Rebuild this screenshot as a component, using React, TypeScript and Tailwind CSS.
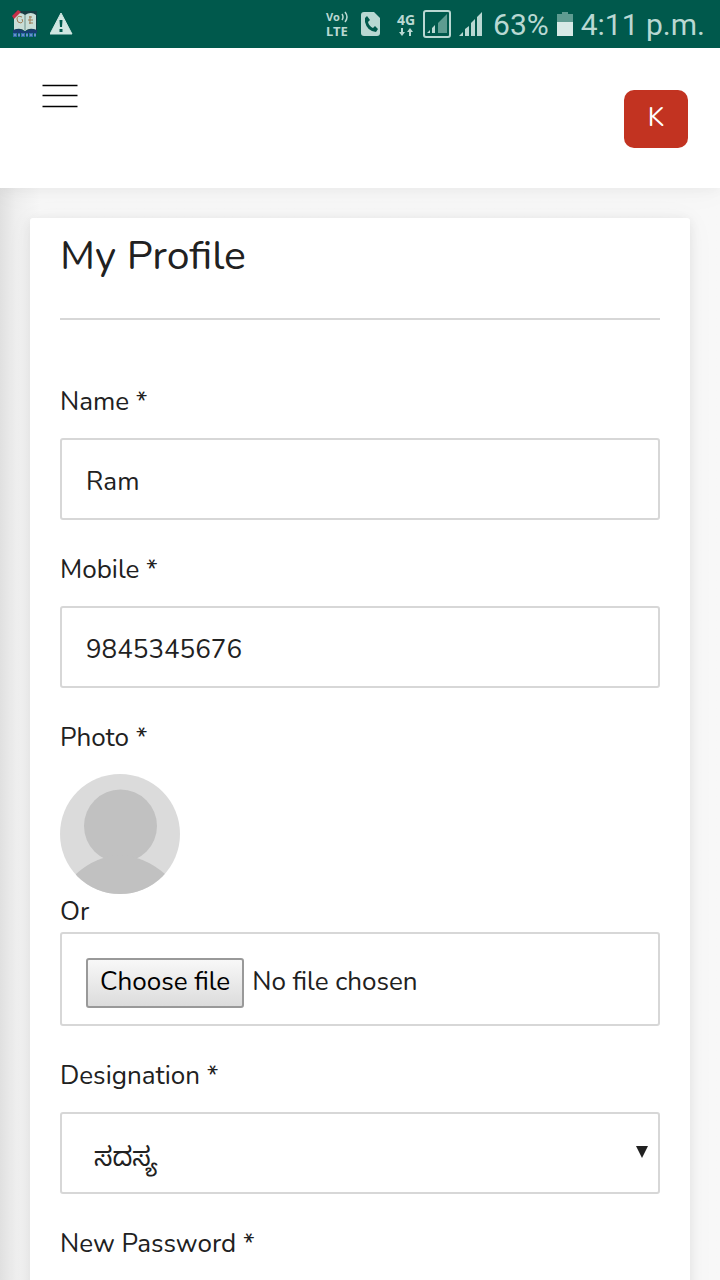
import { useState } from "react";
import type { ReactNode } from "react";

const inputStyle =
  "block h-[82px] w-full rounded-[3px] border-2 border-[#d7d7d7] bg-white px-6 pt-1 text-[#212121] outline-none";

function StatusBar() {
  return (
    <div className="flex h-12 shrink-0 items-center justify-between bg-[#00594c] pl-3 pr-[15px] font-[Roboto,sans-serif] text-[#b9d8d2]">
      <div className="flex items-center gap-3">
        <svg width="26" height="28" viewBox="0 0 26 28">
          <path d="M3 1h22v19H3z" fill="#173d43" />
          <path d="M2 5q6-4 11 0q6-4 11 0v15q-6-3-11 1q-5-4-11-1z" fill="#c9ded7" />
          <path d="M13 5v15" stroke="#68908b" />
          <path d="M10 7q-5-2-5 2t4 4q3-1 1-4M17 7h3M16 10h5M17 13h4M18 6v8" stroke="#9c7b55" fill="none" />
          <path d="M0 6L6 0l3 2-7 7z" fill="#c52f48" />
          <path d="M1 20q6-2 11 1h2q5-3 11-1v3H1z" fill="#173d70" />
          <path d="M1 25h24" stroke="#326cad" strokeWidth="4" strokeDasharray="4 1 2 1" />
          <path d="M2 25h22" stroke="#9ebbd8" strokeDasharray="2 2" />
        </svg>
        <svg width="24" height="24" viewBox="0 0 24 24">
          <path d="M11 1L22 22H0z" fill="#d0e6e1" stroke="#d0e6e1" strokeWidth="1" strokeLinejoin="round" />
          <path d="M9.500 8h3l-.5 7h-2zM9.500 17h3v3h-3z" fill="#00594c" />
        </svg>
      </div>
      <div className="flex items-center">
        <div className="mr-3 flex flex-col font-['Noto_Sans',sans-serif] font-bold">
          <div className="flex items-center text-[11px] leading-[14px]">
            Vo
            <svg width="9" height="12" viewBox="0 0 9 12" fill="none" stroke="currentColor" strokeWidth="1.500">
              <path d="M2 3q2 3 0 6M5 1q4 5 0 10" />
            </svg>
          </div>
          <div className="text-[13px] leading-[14px]">LTE</div>
        </div>
        <svg className="mr-4" width="20" height="24" viewBox="0 0 20 24">
          <path d="M3 0h10l6 6v15q0 3-3 3H3q-3 0-3-3V3q0-3 3-3z" fill="currentColor" />
          <path d="M4 6l2-2 3 4-2 2q1 4 5 6l2-2 3 3-2 3Q6 19 4 10z" fill="#00594c" />
        </svg>
        <div className="mr-2 flex flex-col items-center font-['Noto_Sans',sans-serif] text-[14px] font-bold leading-[16px]">
          4G
          <svg width="14" height="8" viewBox="0 0 14 8" fill="currentColor">
            <path d="M2 0h2v4h2L3 8 0 4h2zM10 8h2V4h2L11 0 8 4h2z" />
          </svg>
        </div>
        <svg className="mr-2" width="28" height="28" viewBox="0 0 28 28">
          <rect x="1" y="1" width="26" height="26" rx="2" fill="none" stroke="currentColor" strokeWidth="2" />
          <path d="M15 13L24 4v19h-9z" fill="#5e9c91" />
          <path d="M4 23l3-3v3zM9 23v-5l3-3v8z" fill="currentColor" />
        </svg>
        <svg className="mr-2" width="26" height="24" viewBox="0 0 26 24" fill="currentColor">
          <path d="M0 24l4-4v4zM6 24v-7l4-3v10zM12 24V11l4-4v17zM18 24V5l5-5v24z" />
        </svg>
        <span className="mr-2 pt-0.5 text-[30px] leading-[36px]">63%</span>
        <svg className="mr-2" width="16" height="24" viewBox="0 0 16 24">
          <path d="M5 0h6v2h5v9H0V2h5z" fill="#5e9c91" />
          <path d="M0 10h16v14H0z" fill="#d7eae6" />
        </svg>
        <span className="pt-0.5 text-[30px] leading-[36px]">4:11 p.m.</span>
      </div>
    </div>
  );
}

type FieldProps = {
  id: string;
  label: string;
  children: ReactNode;
};

function Field({ id, label, children }: FieldProps) {
  return (
    <div className="mb-7">
      <label htmlFor={id} className="mb-3.5 block leading-[44px]">
        {label} *
      </label>
      {children}
    </div>
  );
}

export default function App() {
  const [name, setName] = useState("Ram");
  const [mobile, setMobile] = useState("9845345676");
  const [fileName, setFileName] = useState("");

  return (
    <div className="flex h-screen flex-col font-[Nunito,Lato,'Noto_Sans_Kannada',sans-serif] text-[26px] text-[#212121]">
      <StatusBar />
      <div className="flex-1 overflow-y-auto bg-[#f8f8f8] [scrollbar-width:none]">
        <header className="relative flex h-[140px] items-start justify-between bg-white px-8 shadow-[0_2px_30px_rgba(0,0,0,0.04),0_2px_12px_rgba(0,0,0,0.04)]">
          <button type="button" aria-label="Menu" className="mt-8 px-2.5">
            <svg width="36" height="28" viewBox="0 0 36 28" stroke="#000" strokeWidth="1.300">
              <path d="M.5 5.500h35M.5 15.500h35M.5 26.500h35" />
            </svg>
          </button>
          <button type="button" className="mt-[42px] h-[58px] w-16 rounded-[10px] bg-[#c23321] pb-1 text-white">
            K
          </button>
        </header>

        <main className="bg-linear-to-r from-[#e0e0e0] via-[#efefef] via-[16px] to-[#f8f8f8] to-[40px] p-[30px]">
          <div className="rounded-[3px] bg-white px-[30px] pb-[30px] shadow-[0_2px_30px_rgba(0,0,0,0.04),0_2px_12px_rgba(0,0,0,0.08)]">
            <h1 className="mb-[60px] border-b-2 border-[#d7d7d7] pb-6 text-[41px] leading-[76px]">My Profile</h1>
            <form>
              <Field id="name" label="Name">
                <input
                  id="name"
                  type="text"
                  className={inputStyle}
                  value={name}
                  onChange={(e) => setName(e.currentTarget.value)}
                />
              </Field>
              <Field id="mobile" label="Mobile">
                <input
                  id="mobile"
                  type="tel"
                  className={inputStyle}
                  value={mobile}
                  onChange={(e) => setMobile(e.currentTarget.value)}
                />
              </Field>
              <Field id="photo" label="Photo">
                <svg className="size-[120px] rounded-full bg-[#dbdbdb]" viewBox="0 0 120 120" fill="#c1c1c1">
                  <circle cx="60.500" cy="52" r="36.500" />
                  <path d="M16 100Q36 82 60 81Q84 82 105 100V120H16z" />
                </svg>
                <div className="pb-0.5 leading-[36px]">Or</div>
                <div className="flex h-[94px] items-center gap-2 rounded-[3px] border-2 border-[#d7d7d7] px-6 pt-2">
                  <label
                    htmlFor="photo"
                    className="h-[50px] rounded-[3px] border-2 border-[#999] bg-linear-to-b from-[#f8f8f8] to-[#dcdcdc] px-3 leading-[44px] text-black"
                  >
                    Choose file
                  </label>
                  <input
                    id="photo"
                    type="file"
                    className="sr-only"
                    onChange={(e) => setFileName(e.currentTarget.files?.[0]?.name ?? "")}
                  />
                  <span className="pb-1">{fileName || "No file chosen"}</span>
                </div>
              </Field>
              <Field id="designation" label="Designation">
                <div className="relative">
                  <select
                    id="designation"
                    className="block h-[82px] w-full appearance-none rounded-[3px] border-2 border-[#d7d7d7] bg-white px-8 pt-2 outline-none"
                  >
                    <option>ಸದಸ್ಯ</option>
                  </select>
                  <svg className="pointer-events-none absolute right-3 top-[34px]" width="12" height="12" viewBox="0 0 12 12">
                    <path d="M0 0h12L6 12z" fill="#212121" />
                  </svg>
                </div>
              </Field>
              <Field id="password" label="New Password">
                <input id="password" type="password" className={inputStyle} />
              </Field>
            </form>
          </div>
        </main>
      </div>
    </div>
  );
}
